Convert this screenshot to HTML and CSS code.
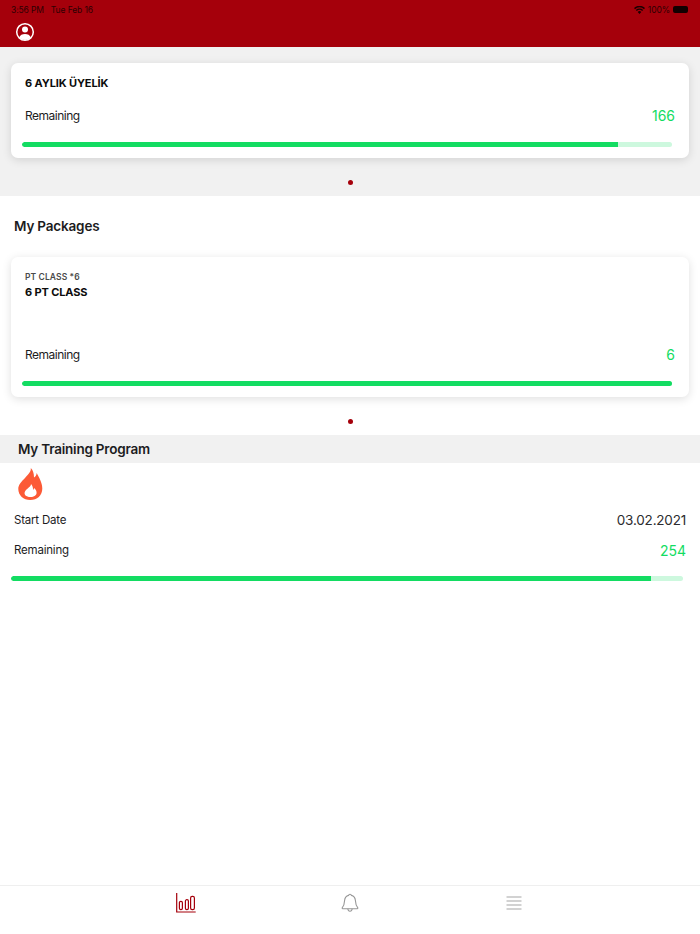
FILE: index.html
```html
<!DOCTYPE html>
<html lang="en">
<head>
  <meta charset="UTF-8">
  <meta name="viewport" content="width=device-width, initial-scale=1">
  <title>Dashboard</title>
  <link rel="stylesheet" href="styles.css">
</head>
<body>

  <div class="app">
    <!-- Top bar -->
    <header class="topbar">
      <div class="status">
        <span>3:56 PM&nbsp;&nbsp; Tue Feb 16</span>
        <div class="status-right">
          <svg class="wifi" viewBox="0 0 14 10" width="11" height="8"><path d="M7 10 4.700 7.400a3.300 3.300 0 0 1 4.600 0zM3.600 6.300 2.300 4.900a6.800 6.800 0 0 1 9.400 0l-1.300 1.400a5 5 0 0 0-6.800 0zM1.300 3.900 0 2.500a10 10 0 0 1 14 0l-1.300 1.400a8.200 8.200 0 0 0-11.400 0z"/></svg>
          <span>100%</span>
          <span class="battery"></span>
        </div>
      </div>
      <svg class="user-icon" viewBox="0 0 20 20" width="20" height="20">
        <circle cx="10" cy="10" r="8.300" fill="none" stroke="#fff" stroke-width="1.500"/>
        <circle cx="10" cy="7.600" r="3" fill="#fff"/>
        <path d="M4.200 15.600c.9-2.500 3-3.600 5.800-3.600s4.900 1.100 5.800 3.600a8.300 8.300 0 0 1-11.600 0z" fill="#fff"/>
      </svg>
    </header>

    <!-- Membership -->
    <section class="band">
      <div class="card card-member">
        <div class="card-title">6 AYLIK ÜYELİK</div>
        <div class="row card-row">
          <span>Remaining</span>
          <span class="count">166</span>
        </div>
        <div class="bar"><div class="bar-fill" style="width: 91.7%"></div></div>
      </div>
      <div class="dot-wrap"><span class="dot"></span></div>
    </section>

    <!-- Packages -->
    <section class="packages">
      <h2>My Packages</h2>
      <div class="card card-package">
        <div class="card-sub">PT CLASS *6</div>
        <div class="card-title">6 PT CLASS</div>
        <div class="row card-row">
          <span>Remaining</span>
          <span class="count">6</span>
        </div>
        <div class="bar"><div class="bar-fill" style="width: 100%"></div></div>
      </div>
      <div class="dot-wrap"><span class="dot"></span></div>
    </section>

    <!-- Training program -->
    <h2 class="section-head">My Training Program</h2>
    <section class="program">
      <svg class="flame" viewBox="0 0 25 32" width="25" height="32">
        <path fill="#fc5a36" d="M12.800 0C13.300 3.500 10.500 6 7 10 3 14 .3 17 .3 21c0 6.500 5.200 11 12 11s12-4.500 12-11.500c0-6-3.300-11-5.600-15.500-.2 2-1.200 3.500-2.700 4.500 0-4-1-7.500-3.200-9.500z"/>
        <path fill="#fff" d="M13 16c0 3-4 4-6 7.500C5.500 26.500 8 29 12.500 29s7-2.500 5.800-6c-.5-1.500-1.400-2.200-2.300-3-.1 1-.5 1.500-1 2 .2-2.500-.5-4.500-2-6z"/>
      </svg>
      <div class="row program-row">
        <span>Start Date</span>
        <span class="date">03.02.2021</span>
      </div>
      <div class="row program-row">
        <span>Remaining</span>
        <span class="count">254</span>
      </div>
      <div class="bar"><div class="bar-fill" style="width: 95.2%"></div></div>
    </section>

    <!-- Tab bar -->
    <nav class="tabbar">
      <div class="tab">
        <svg viewBox="0 0 22 20" width="22" height="20" fill="none" stroke="#a5000b" stroke-width="1.200">
          <path d="M1.700 0V19H20.700"/>
          <rect x="4.400" y="8.300" width="3" height="8.400" rx="1.400"/>
          <rect x="10.400" y="6.700" width="3" height="10" rx="1.400"/>
          <rect x="15.600" y="3.300" width="3.800" height="13.400" rx="1.600"/>
        </svg>
      </div>
      <div class="tab">
        <svg viewBox="0 0 18 20" width="18" height="20" fill="none" stroke="#979797" stroke-width="1.100">
          <path d="M9 1.200c-.8 0-1.300.5-1.400 1.200C5 3.100 3.800 5 3.600 7.500c-.2 3.500-.6 5.200-2.300 7.200-.4.500-.1 1 .4 1h14.600c.5 0 .8-.5.400-1-1.700-2-2.100-3.700-2.300-7.200C14.200 5 13 3.100 10.400 2.400 10.300 1.700 9.800 1.200 9 1.200z"/>
          <path d="M6.800 15.800c.2 1.500 1 2.400 2.200 2.400s2-.9 2.200-2.400"/>
        </svg>
      </div>
      <div class="tab">
        <svg viewBox="0 0 16 14" width="16" height="14" fill="none" stroke="#a6a6a6" stroke-width="1.200">
          <path d="M.5 1h15M.5 5h15M.5 9h15M.5 13h15"/>
        </svg>
      </div>
    </nav>
  </div>

</body>
</html>
```

FILE: styles.css
```css
* {
  box-sizing: border-box;
}
body {
  font-family: Inter, "Liberation Sans", sans-serif;
  background-color: white;
  color: #1c1c1e;
  margin: 0;
}
.app {
  width: 700px;
  height: 934px;
  display: flex;
  flex-direction: column;
  overflow: hidden;
}
.topbar {
  height: 47px;
  background-color: #a5000b;
  flex-shrink: 0;
  padding: 0 15px;
}
.status {
  height: 18px;
  margin: 0 -3px 0 -4px;
  padding: 1px 0 0;
  display: flex;
  justify-content: space-between;
  align-items: center;
  font-size: 8.5px;
  letter-spacing: -0.1px;
  color: #2e0003;
}
.status-right {
  display: flex;
  align-items: center;
  gap: 3px;
}
.wifi {
  fill: #1a0002;
}
.battery {
  width: 15px;
  height: 7px;
  background-color: #120001;
  border-radius: 2px;
}
.user-icon {
  display: block;
  margin-top: 4px;
}
.band {
  background-color: #f1f1f1;
  padding: 16px 11px 0;
  height: 149px;
  flex-shrink: 0;
}
.card {
  background-color: white;
  border-radius: 7px;
  box-shadow: 0 2px 10px rgba(0, 0, 0, 0.13);
  padding: 0 11px;
  width: 678px;
}
.card-member {
  height: 95px;
  padding-top: 13px;
}
.card-package {
  height: 140px;
  padding-top: 15px;
}
.card-sub {
  font-size: 8.5px;
  font-weight: 600;
  letter-spacing: 0.1px;
  color: #4a4a4a;
  padding-left: 3px;
  line-height: 10px;
}
.card-title {
  font-size: 11px;
  font-weight: 700;
  letter-spacing: -0.12px;
  color: #0c0c0c;
  padding-left: 3px;
  line-height: 14px;
}
.card-sub + .card-title {
  margin-top: 3px;
}
.row {
  display: flex;
  justify-content: space-between;
  align-items: center;
}
.card-row {
  font-size: 12px;
  letter-spacing: -0.5px;
  padding: 0 3px;
  margin-top: 15px;
  height: 20px;
}
.card-package .card-row {
  margin-top: 45px;
}
.count {
  color: #13dc62;
  font-size: 14px;
  letter-spacing: 0;
}
.bar {
  height: 5px;
  border-radius: 3px;
  background-color: #cdf8de;
  margin-top: 17px;
  margin-right: 6px;
  overflow: hidden;
}
.bar-fill {
  height: 100%;
  border-radius: 3px 0 0 3px;
  background-color: #13dc62;
}
.dot-wrap {
  display: flex;
  justify-content: center;
  margin-top: 22px;
}
.dot {
  width: 5px;
  height: 5px;
  border-radius: 50%;
  background-color: #a5000b;
}
.packages {
  height: 239px;
  padding: 0 11px;
  flex-shrink: 0;
}
.packages h2 {
  font-size: 13.5px;
  font-weight: 600;
  letter-spacing: -0.18px;
  margin: 0;
  padding: 22px 3px 0;
  height: 61px;
  line-height: 17px;
}
.section-head {
  background-color: #f1f1f1;
  font-size: 13.5px;
  font-weight: 600;
  letter-spacing: -0.22px;
  margin: 0;
  height: 28px;
  line-height: 28px;
  padding-left: 18px;
  flex-shrink: 0;
}
.program {
  padding: 5px 14px 0 11px;
  font-size: 11.5px;
  letter-spacing: -0.2px;
}
.flame {
  display: block;
  margin: 0 0 0 7px;
}
.program-row {
  padding-left: 3px;
  height: 20px;
  margin-top: 10px;
}
.date {
  font-size: 13.5px;
  letter-spacing: -0.2px;
  color: #2c2c2e;
}
.program .bar {
  margin-top: 16px;
  margin-right: 3px;
}
.tabbar {
  margin-top: auto;
  height: 49px;
  border-top: 1px solid #efefef;
  display: flex;
  justify-content: center;
  flex-shrink: 0;
}
.tab {
  width: 164px;
  height: 34px;
  display: flex;
  justify-content: center;
  align-items: center;
}
```
